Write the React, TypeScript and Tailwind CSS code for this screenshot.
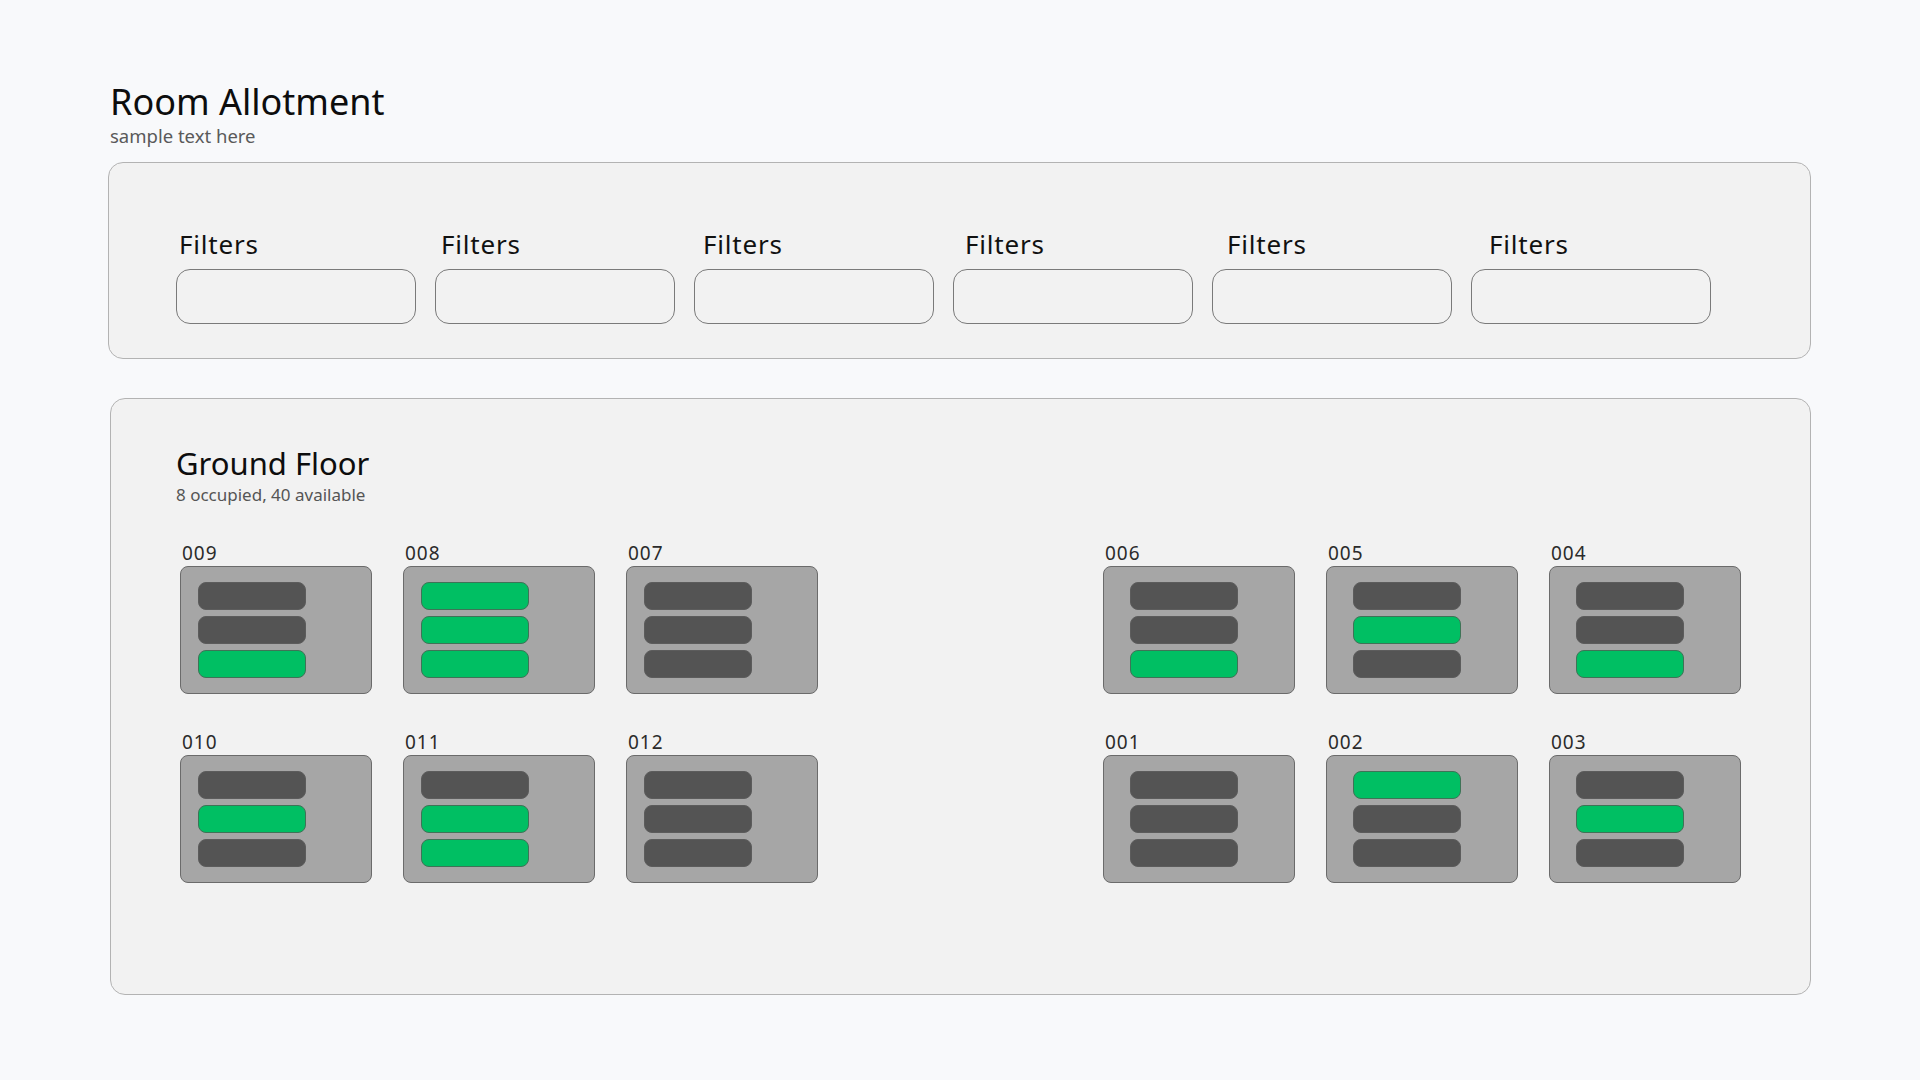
import React from "react";

type Room = { id: string; bars: boolean[] };

const leftTop: Room[] = [
  { id: "009", bars: [false, false, true] },
  { id: "008", bars: [true, true, true] },
  { id: "007", bars: [false, false, false] },
];
const rightTop: Room[] = [
  { id: "006", bars: [false, false, true] },
  { id: "005", bars: [false, true, false] },
  { id: "004", bars: [false, false, true] },
];
const leftBottom: Room[] = [
  { id: "010", bars: [false, true, false] },
  { id: "011", bars: [false, true, true] },
  { id: "012", bars: [false, false, false] },
];
const rightBottom: Room[] = [
  { id: "001", bars: [false, false, false] },
  { id: "002", bars: [true, false, false] },
  { id: "003", bars: [false, true, false] },
];

function RoomCard({ room, right }: { room: Room; right?: boolean }) {
  return (
    <div className="flex flex-col w-[192px]">
      <div className="pl-[2px] text-[19px] tracking-[1px] leading-none text-[#2b2b2b] h-[19px] mb-[3px]">
        {room.id}
      </div>
      <div
        className={`h-[128px] w-[192px] rounded-[8px] border border-[#6b6b6b] bg-[#a6a6a6] pt-[15px] flex flex-col gap-[6px] ${
          right ? "pl-[26px]" : "pl-[17px]"
        }`}
      >
        {room.bars.map((g, i) => (
          <div
            key={i}
            className={
              g
                ? "h-[28px] w-[108px] rounded-[8px] border border-[#3f7357] bg-[#00bf63]"
                : "h-[28px] w-[108px] rounded-[8px] border border-[#5c5c5c] bg-[#545454]"
            }
          />
        ))}
      </div>
    </div>
  );
}

function Group({ rooms, right }: { rooms: Room[]; right?: boolean }) {
  return (
    <div className="flex gap-[31px]">
      {rooms.map((r) => (
        <RoomCard key={r.id} room={r} right={right} />
      ))}
    </div>
  );
}

export default function App() {
  const labels = [0, 1, 2, 3, 4, 5];
  return (
    <div
      className="min-h-[1080px] w-[1920px] bg-[#f8f9fb] text-black"
      style={{ fontFamily: '"Noto Sans", "Open Sans", sans-serif' }}
    >
      <div className="pl-[108px] pt-[84px] w-[1812px]">
        <div className="pl-[2px]">
          <h1 className="text-[36px] leading-none font-normal text-[#0d0d0d]">Room Allotment</h1>
          <p className="mt-[7px] text-[18.5px] leading-none text-[#5a5a5a]">sample text here</p>
        </div>

        <div className="mt-[16px] w-[1703px] h-[197px] rounded-[15px] border border-[#b3b3b3] bg-[#f2f2f2] pt-[68px]">
          <div className="flex pl-[70px]">
            {labels.map((i) => (
              <div key={i} className="w-[262px] h-[26px] text-[26px] tracking-[0.8px] leading-none text-[#111]">
                Filters
              </div>
            ))}
          </div>
          <div className="flex pl-[67px] gap-[19px] mt-[12px]">
            {labels.map((i) => (
              <div
                key={i}
                className="w-[240px] h-[55px] rounded-[14px] border border-[#7a7a7a] bg-[#f2f2f2]"
              />
            ))}
          </div>
        </div>

        <div className="mt-[39px] ml-[2px] w-[1701px] h-[597px] rounded-[15px] border border-[#b3b3b3] bg-[#f2f2f2] pt-[49px] px-[69px]">
          <div className="-ml-[4px]">
            <h2 className="text-[31px] leading-none font-normal text-[#0d0d0d]">Ground Floor</h2>
            <p className="mt-[7px] text-[17px] leading-none text-[#555]">8 occupied, 40 available</p>
          </div>
          <div className="mt-[41px] flex justify-between">
            <Group rooms={leftTop} />
            <Group rooms={rightTop} right />
          </div>
          <div className="mt-[39px] flex justify-between">
            <Group rooms={leftBottom} />
            <Group rooms={rightBottom} right />
          </div>
        </div>
      </div>
    </div>
  );
}
